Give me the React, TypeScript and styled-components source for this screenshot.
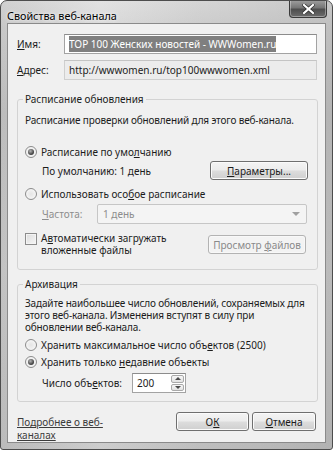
import React from 'react'
import styled, { createGlobalStyle } from 'styled-components'

const FONT = `"Noto Sans", "DejaVu Sans", sans-serif`

const GlobalStyle = createGlobalStyle`
  html, body {
    margin: 0;
    padding: 0;
    background: #ffffff;
  }
  body {
    font-family: ${FONT};
    font-size: 10px;
    color: #1c1c1c;
  }
  * {
    box-sizing: border-box;
  }
`

const Window = styled.div`
  width: 333px;
  height: 450px;
  border: 1px solid #4d4d4d;
  border-radius: 7px 7px 3px 3px;
  background:
    linear-gradient(90deg, rgba(0, 0, 0, 0.06) 0%, rgba(255, 255, 255, 0.12) 30%, rgba(0, 0, 0, 0.04) 60%, rgba(0, 0, 0, 0.1) 100%),
    linear-gradient(180deg, #dedede 0%, #d4d4d4 6%, #c8c8c8 25%, #cfcfcf 60%, #c6c6c6 100%);
  padding: 0 6px 6px;
  display: flex;
  flex-direction: column;
  overflow: hidden;
`

const TitleBar = styled.div`
  height: 25px;
  display: flex;
  align-items: flex-start;
  justify-content: space-between;
`

const Title = styled.div`
  font-size: 10.8px;
  line-height: 14px;
  padding-top: 8px;
  color: #000;
  text-shadow: 0 0 4px #f4f4f4, 0 0 2px #f4f4f4;
`

const CloseButton = styled.div`
  width: 38px;
  height: 18px;
  margin: -1px -1px 0 0;
  border: 1px solid #3a3a3a;
  border-top: none;
  border-radius: 0 0 4px 4px;
  background: linear-gradient(180deg, #a0a0a0 0%, #767676 45%, #4e4e4e 55%, #6c6c6c 100%);
  box-shadow: inset 0 0 0 1px rgba(255, 255, 255, 0.35);
  display: flex;
  align-items: center;
  justify-content: center;
`

const Client = styled.div`
  flex: 1;
  background: #f0f0f0;
  border: 1px solid #8a8a8a;
  padding: 10px 8px 0 9px;
  display: flex;
  flex-direction: column;
`

const FieldRow = styled.div<{ $gap?: number }>`
  display: flex;
  align-items: center;
  height: 20px;
  margin-top: ${p => p.$gap ?? 0}px;
`

const FieldLabel = styled.span`
  width: 47px;
  flex: none;
`

const TextBox = styled.div<{ $readOnly?: boolean }>`
  flex: 1;
  height: 20px;
  display: flex;
  align-items: center;
  padding-left: 4px;
  border: 1px solid ${p => (p.$readOnly ? '#cfcfcf' : '#a3a3a3')};
  border-top-color: ${p => (p.$readOnly ? '#c4c4c4' : '#8c8c8c')};
  background: ${p => (p.$readOnly ? '#ececec' : '#ffffff')};
  white-space: nowrap;
  overflow: hidden;
`

const Selected = styled.span`
  background: #7f7f7f;
  color: #ffffff;
  padding: 1px 0;
`

const Group = styled.fieldset<{ $gap: number; $pad: string }>`
  margin: ${p => p.$gap}px -1px 0 0;
  padding: ${p => p.$pad};
  border: 1px solid #d3d3d3;
  border-radius: 3px;
  min-width: 0;
`

const Legend = styled.legend`
  padding: 0 2px;
  margin-left: -2px;
  line-height: 14px;
`

const Para = styled.div<{ $gap?: number }>`
  line-height: 12px;
  margin-top: ${p => p.$gap ?? 0}px;
  margin-right: -6px;
  white-space: nowrap;
  letter-spacing: -0.15px;
`

const OptionRow = styled.div<{ $gap: number }>`
  display: flex;
  align-items: center;
  gap: 4px;
  height: 14px;
  margin-top: ${p => p.$gap}px;
`

const Radio = styled.span<{ $checked?: boolean }>`
  width: 12px;
  height: 12px;
  flex: none;
  border-radius: 50%;
  border: 1px solid #8c8c8c;
  background: radial-gradient(circle at 50% 50%, #e4e4e4 0%, #f2f2f2 60%, #fafafa 100%);
  display: flex;
  align-items: center;
  justify-content: center;

  &::after {
    content: '';
    display: ${p => (p.$checked ? 'block' : 'none')};
    width: 6px;
    height: 6px;
    border-radius: 50%;
    background: radial-gradient(circle at 40% 35%, #b5b5b5 0%, #4a4a4a 60%, #262626 100%);
  }
`

const CheckBox = styled.span`
  width: 12px;
  height: 12px;
  flex: none;
  margin-top: 1px;
  border: 1px solid #8c8c8c;
  background: linear-gradient(135deg, #dcdcdc 0%, #f6f6f6 100%);
  box-shadow: inset 0 0 0 1px #f4f4f4;
`

const IndentRow = styled.div<{ $gap: number; $height: number }>`
  display: flex;
  align-items: center;
  height: ${p => p.$height}px;
  margin-top: ${p => p.$gap}px;
  padding-left: 17px;
`

const Dimmed = styled.span<{ $width?: number }>`
  color: #8d8d8d;
  width: ${p => (p.$width ? `${p.$width}px` : 'auto')};
  flex: none;
`

const Plain = styled.span<{ $width?: number }>`
  width: ${p => (p.$width ? `${p.$width}px` : 'auto')};
  flex: none;
`

const Button = styled.div<{ $width: number; $disabled?: boolean; $push?: boolean }>`
  width: ${p => p.$width}px;
  height: 19px;
  flex: none;
  margin-left: ${p => (p.$push ? 'auto' : '0')};
  display: flex;
  align-items: center;
  justify-content: center;
  white-space: nowrap;
  border-radius: 3px;
  border: 1px solid ${p => (p.$disabled ? '#b3b3b3' : '#6f6f6f')};
  color: ${p => (p.$disabled ? '#8a8a8a' : '#1c1c1c')};
  background: ${p =>
    p.$disabled
      ? '#f3f3f3'
      : 'linear-gradient(180deg, #f4f4f4 0%, #ececec 48%, #dddddd 52%, #cfcfcf 100%)'};
  box-shadow: inset 0 0 0 1px ${p => (p.$disabled ? '#f8f8f8' : '#fbfbfb')};
`

const Combo = styled.div`
  width: 210px;
  height: 20px;
  flex: none;
  display: flex;
  align-items: center;
  justify-content: space-between;
  padding: 0 6px 0 5px;
  border: 1px solid #c6c6c6;
  border-radius: 2px;
  background: #f4f4f4;
  color: #8d8d8d;
`

const Arrow = styled.span`
  width: 0;
  height: 0;
  border-left: 4px solid transparent;
  border-right: 4px solid transparent;
  border-top: 4px solid #a0a0a0;
`

const CheckRow = styled.div`
  display: flex;
  align-items: flex-start;
  gap: 4px;
  margin-top: 8px;
`

const CheckText = styled.div`
  flex: 1;
  line-height: 12px;
`

const PushDown = styled.div`
  margin-top: 3px;
  margin-right: 2px;
`

const Spin = styled.div`
  width: 54px;
  height: 20px;
  display: flex;
  border: 1px solid #a3a3a3;
  border-top-color: #8c8c8c;
  background: #ffffff;
`

const SpinValue = styled.span`
  flex: 1;
  padding-left: 4px;
  display: flex;
  align-items: center;
`

const SpinButtons = styled.div`
  width: 15px;
  display: flex;
  flex-direction: column;
  padding: 1px;
  gap: 1px;
`

const SpinButton = styled.div<{ $up?: boolean }>`
  flex: 1;
  border: 1px solid #a9a9a9;
  border-radius: 2px;
  background: linear-gradient(180deg, #f6f6f6 0%, #e2e2e2 100%);
  display: flex;
  align-items: center;
  justify-content: center;

  &::after {
    content: '';
    border-left: 3px solid transparent;
    border-right: 3px solid transparent;
    ${p => (p.$up ? 'border-bottom: 3px solid #4a4a4a;' : 'border-top: 3px solid #4a4a4a;')}
  }
`

const Footer = styled.div`
  display: flex;
  align-items: flex-start;
  margin-top: 10px;
  padding-right: 1px;
`

const Link = styled.a`
  color: #3c3c3c;
  text-decoration: underline;
  line-height: 13px;
  margin-top: 4px;
  cursor: pointer;
`

const Buttons = styled.div`
  margin-left: auto;
  display: flex;
  gap: 3px;
`

const CloseGlyph = () => (
  <svg width="13" height="10" viewBox="0 0 13 10">
    <path d="M2 1 L11 9 M11 1 L2 9" stroke="#303030" strokeWidth="3.6" strokeLinecap="square" />
    <path d="M2 1 L11 9 M11 1 L2 9" stroke="#ffffff" strokeWidth="2.2" strokeLinecap="square" />
  </svg>
)

export default function App() {
  return (
    <>
      <GlobalStyle />
      <Window>
        <TitleBar>
          <Title>Свойства веб-канала</Title>
          <CloseButton>
            <CloseGlyph />
          </CloseButton>
        </TitleBar>
        <Client>
          <FieldRow>
            <FieldLabel>
              <u>И</u>мя:
            </FieldLabel>
            <TextBox>
              <Selected>TOP 100 Женских новостей - WWWomen.ru</Selected>
            </TextBox>
          </FieldRow>
          <FieldRow $gap={6}>
            <FieldLabel>
              <u>А</u>дрес:
            </FieldLabel>
            <TextBox $readOnly>http://wwwomen.ru/top100wwwomen.xml</TextBox>
          </FieldRow>

          <Group $gap={12} $pad="0 9px 13px 7px">
            <Legend>Расписание обновления</Legend>
            <Para $gap={8}>Расписание проверки обновлений для этого веб-канала.</Para>
            <OptionRow $gap={19}>
              <Radio $checked />
              <span>
                Расписание по умо<u>л</u>чанию
              </span>
            </OptionRow>
            <IndentRow $gap={2} $height={19}>
              <Plain>По умолчанию: 1 день</Plain>
              <Button $width={98} $push>
                <span>
                  <u>П</u>араметры...
                </span>
              </Button>
            </IndentRow>
            <OptionRow $gap={7}>
              <Radio />
              <span>
                Использовать осо<u>б</u>ое расписание
              </span>
            </OptionRow>
            <IndentRow $gap={3} $height={20}>
              <Dimmed $width={55}>
                <u>Ч</u>астота:
              </Dimmed>
              <Combo>
                <span>1 день</span>
                <Arrow />
              </Combo>
            </IndentRow>
            <CheckRow>
              <CheckBox />
              <CheckText>
                А<u>в</u>томатически загружать
                <br />
                вложенные файлы
              </CheckText>
              <PushDown>
                <Button $width={98} $disabled>
                  <span>
                    Просмотр <u>ф</u>айлов
                  </span>
                </Button>
              </PushDown>
            </CheckRow>
          </Group>

          <Group $gap={7} $pad="0 9px 8px 7px">
            <Legend>Архивация</Legend>
            <Para $gap={6}>
              Задайте наибольшее число обновлений, сохраняемых для
              <br />
              этого веб-канала. Изменения вступят в силу при
              <br />
              обновлении веб-канала.
            </Para>
            <OptionRow $gap={5}>
              <Radio />
              <span>
                Хранить максимальное число объ<u>е</u>ктов (2500)
              </span>
            </OptionRow>
            <OptionRow $gap={3}>
              <Radio $checked />
              <span>
                Хранить только <u>н</u>едавние объекты
              </span>
            </OptionRow>
            <IndentRow $gap={4} $height={20}>
              <Plain $width={90}>
                Число объ<u>е</u>ктов:
              </Plain>
              <Spin>
                <SpinValue>200</SpinValue>
                <SpinButtons>
                  <SpinButton $up />
                  <SpinButton />
                </SpinButtons>
              </Spin>
            </IndentRow>
          </Group>

          <Footer>
            <Link>
              Подробнее о веб-
              <br />
              каналах
            </Link>
            <Buttons>
              <Button $width={73}>
                <span>
                  О<u>К</u>
                </span>
              </Button>
              <Button $width={64}>
                <span>
                  <u>О</u>тмена
                </span>
              </Button>
            </Buttons>
          </Footer>
        </Client>
      </Window>
    </>
  )
}
